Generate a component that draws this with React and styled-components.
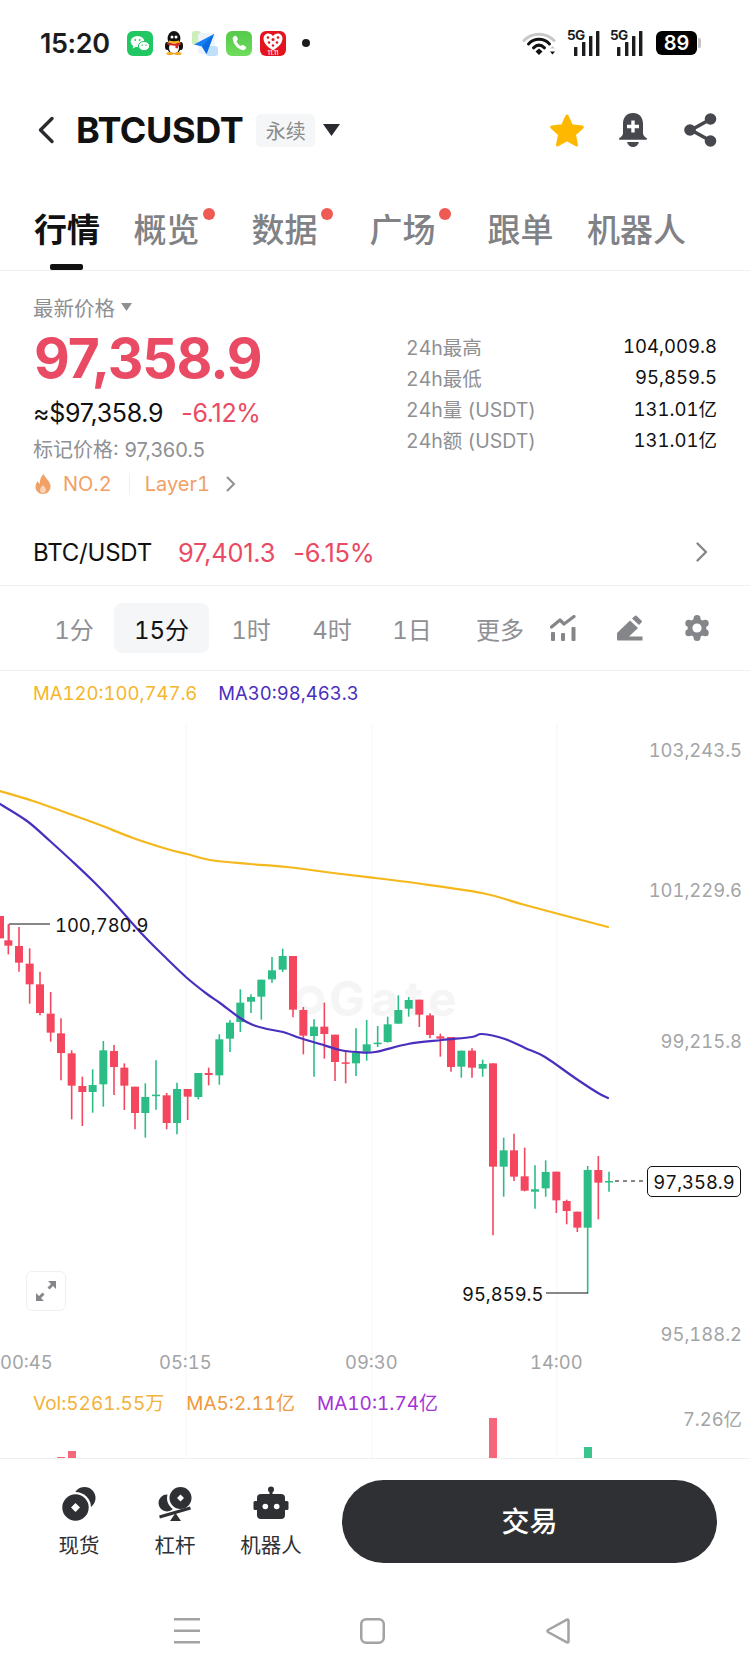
import React from "react";
import styled, { createGlobalStyle } from "styled-components";

const FONT = `Inter, "Noto Sans CJK SC", sans-serif`;
const RED = "#ea4b64";
const ORANGE = "#f1a066";

const Global = createGlobalStyle`
  html, body { margin: 0; padding: 0; background: #fff; }
  body { font-family: ${FONT}; color: #111; }
  * { box-sizing: border-box; }
`;

const Page = styled.div`
  width: 750px;
  height: 1675px;
  overflow: hidden;
  background: #fff;
  display: flex;
  flex-direction: column;
`;

/* ---------- status bar ---------- */
const StatusBar = styled.div`
  height: 84px;
  display: flex;
  align-items: center;
  padding: 2px 53px 0 40px;
`;
const Clock = styled.span`
  font-size: 27px;
  font-weight: 600;
  color: #1c1c1e;
  width: 87px;
  letter-spacing: -0.4px;
`;
const AppIcons = styled.div`
  display: flex;
  align-items: center;
  gap: 8px;
`;
const StatusDot = styled.span`
  width: 8px;
  height: 8px;
  border-radius: 50%;
  background: #1c1c1e;
  margin-left: 8px;
`;
const StatusRight = styled.div`
  margin-left: auto;
  display: flex;
  align-items: center;
  gap: 10px;
`;
const Signal = styled.div`
  position: relative;
  width: 33px;
  height: 25px;
`;
const SignalText = styled.span`
  position: absolute;
  left: 0;
  top: -3px;
  font-size: 13.5px;
  font-weight: 700;
  letter-spacing: -0.6px;
  color: #1c1c1e;
  line-height: 15px;
`;
const Battery = styled.div`
  width: 41px;
  height: 24px;
  margin-left: 3px;
  border-radius: 6px;
  background: #000;
  color: #fff;
  font-size: 20px;
  font-weight: 600;
  display: flex;
  align-items: center;
  justify-content: center;
  position: relative;
  &::after {
    content: "";
    position: absolute;
    right: -4px;
    top: 7px;
    width: 3px;
    height: 10px;
    border-radius: 0 2px 2px 0;
    background: #c4c4c4;
  }
`;

/* ---------- header ---------- */
const Header = styled.div`
  height: 92px;
  display: flex;
  align-items: center;
  padding: 0 33px 0 37px;
`;
const Symbol = styled.h1`
  margin: 0 0 0 21px;
  font-size: 36px;
  font-weight: 700;
  letter-spacing: -0.4px;
  color: #111;
`;
const ContractTag = styled.span`
  margin-left: 13px;
  width: 59px;
  height: 33px;
  border-radius: 5px;
  background: #f5f6f7;
  color: #8a8a8a;
  font-size: 20px;
  display: flex;
  align-items: center;
  justify-content: center;
`;
const HeaderActions = styled.div`
  margin-left: auto;
  display: flex;
  align-items: center;
  gap: 33px;
`;
const CaretIcon = styled.svg`
  margin-left: 8px;
  display: block;
`;

/* ---------- tabs ---------- */
const Tabs = styled.nav`
  height: 95px;
  padding: 32px 0 0 34px;
  display: flex;
  gap: 33.5px;
  border-bottom: 1px solid #f0f0f0;
`;
const Tab = styled.div`
  position: relative;
  height: 44px;
  line-height: 44px;
  font-size: 33px;
  font-weight: ${(p) => (p.$active ? 600 : 500)};
  color: ${(p) => (p.$active ? "#111" : "#808285")};
  padding-right: ${(p) => (p.$dot ? 18.5 : 0)}px;
  white-space: nowrap;
  ${(p) =>
    p.$dot &&
    `&::before {
      content: "";
      position: absolute;
      left: 69px;
      top: 0;
      width: 12px;
      height: 12px;
      border-radius: 50%;
      background: #f05a55;
    }`}
  ${(p) =>
    p.$active &&
    `&::after {
      content: "";
      position: absolute;
      left: 16px;
      top: 56px;
      width: 33px;
      height: 6px;
      border-radius: 2px;
      background: #111;
    }`}
`;

/* ---------- price info ---------- */
const Info = styled.section`
  height: 248px;
  padding: 21px 33px 0;
  display: flex;
  justify-content: space-between;
`;
const InfoLeft = styled.div`
  display: flex;
  flex-direction: column;
`;
const LatestLabel = styled.div`
  display: flex;
  align-items: center;
  gap: 6px;
  height: 30px;
  margin-bottom: 1px;
  font-size: 20.5px;
  color: #8f9093;
`;
const Price = styled.div`
  height: 70px;
  margin-left: 1px;
  line-height: 70px;
  font-size: 55.2px;
  font-weight: 700;
  letter-spacing: -1.1px;
  color: ${RED};
`;
const FiatRow = styled.div`
  margin-top: 5px;
  height: 30px;
  display: flex;
  align-items: center;
  gap: 18px;
  font-size: 25px;
  letter-spacing: -0.3px;
  color: #111;
`;
const Change = styled.span`
  color: ${RED};
`;
const MarkPrice = styled.div`
  margin-top: 7px;
  height: 30px;
  line-height: 30px;
  font-size: 20px;
  color: #8f9093;
`;
const TagRow = styled.div`
  margin-top: 4px;
  height: 30px;
  display: flex;
  align-items: center;
  font-size: 20px;
  font-variant-numeric: tabular-nums;
  color: ${ORANGE};
`;
const Rank = styled.span`
  margin-left: 10px;
`;
const TagDivider = styled.span`
  width: 1px;
  height: 22px;
  background: #f0f0f0;
  margin: 0 15px 0 17px;
`;
const TagChevron = styled.svg`
  margin-left: 15px;
  display: block;
`;
const Stats = styled.dl`
  margin: 38.5px 0 0;
  width: 311px;
  display: flex;
  flex-direction: column;
  font-variant-numeric: tabular-nums;
`;
const StatRow = styled.div`
  height: 31px;
  display: flex;
  align-items: center;
  justify-content: space-between;
`;
const StatKey = styled.dt`
  font-size: 19.5px;
  color: #8f9093;
`;
const StatValue = styled.dd`
  margin: 0;
  font-size: 18.5px;
  color: #111;
`;

/* ---------- pair row ---------- */
const PairRow = styled.div`
  height: 67px;
  padding: 0 41px 0 33px;
  display: flex;
  align-items: center;
  font-size: 24px;
  letter-spacing: -0.2px;
  border-bottom: 1px solid #f0f0f0;
`;
const PairPrice = styled.span`
  color: ${RED};
  font-size: 25.4px;
  margin-left: ${(p) => p.$gap}px;
`;
const PairChevron = styled.svg`
  margin-left: auto;
  display: block;
`;

/* ---------- timeframe row ---------- */
const Timeframes = styled.div`
  height: 85px;
  padding-left: 34px;
  display: flex;
  align-items: center;
  border-bottom: 1px solid #f0f0f0;
  font-variant-numeric: tabular-nums;
`;
const Frame = styled.div`
  width: ${(p) => p.$w}px;
  height: 50px;
  border-radius: 8px;
  display: flex;
  align-items: center;
  justify-content: center;
  font-size: 24px;
  color: ${(p) => (p.$active ? "#111" : "#8f9093")};
  background: ${(p) => (p.$active ? "#f5f6f7" : "transparent")};
`;
const FrameIcons = styled.div`
  margin-left: 3px;
  display: flex;
  align-items: center;
  gap: 41px;
`;

/* ---------- chart ---------- */
const Chart = styled.section`
  position: relative;
  height: 787px;
  overflow: hidden;
  font-variant-numeric: tabular-nums;
`;
const ChartSvg = styled.svg`
  display: block;
`;
const Legend = styled.div`
  position: absolute;
  left: ${(p) => p.$x}px;
  top: ${(p) => p.$y - 670}px;
  height: 28px;
  display: flex;
  align-items: center;
  font-size: ${(p) => p.$size}px;
  white-space: nowrap;
`;
const LegendItem = styled.span`
  color: ${(p) => p.$color};
  margin-right: ${(p) => p.$gap || 0}px;
`;
const AxisLabel = styled.span`
  position: absolute;
  right: 8px;
  top: ${(p) => p.$y - 670 - 14}px;
  line-height: 28px;
  font-size: 18.4px;
  color: #a3a4a6;
`;
const TimeLabel = styled.span`
  position: absolute;
  left: ${(p) => p.$x}px;
  top: ${(p) => p.$y - 670 - 14}px;
  line-height: 28px;
  font-size: 18.4px;
  color: #a3a4a6;
`;
const PriceNote = styled.span`
  position: absolute;
  left: ${(p) => p.$x}px;
  top: ${(p) => p.$y - 670 - 14}px;
  line-height: 28px;
  font-size: 18.4px;
  color: #111;
`;
const LastPriceTag = styled.span`
  position: absolute;
  left: 647px;
  top: ${1165 - 670}px;
  width: 94px;
  height: 31px;
  border: 1.5px solid #111;
  border-radius: 5px;
  background: #fff;
  display: flex;
  align-items: center;
  justify-content: center;
  font-size: 18.4px;
  color: #111;
`;
const ExpandButton = styled.button`
  position: absolute;
  left: 26px;
  top: ${1270 - 670}px;
  width: 40px;
  height: 40px;
  padding: 0;
  border: 1.5px solid #f0f0f0;
  border-radius: 6px;
  background: #fff;
  display: flex;
  align-items: center;
  justify-content: center;
`;

/* ---------- bottom ---------- */
const TradeBar = styled.footer`
  height: 123px;
  padding: 21px 33px 0 31px;
  display: flex;
  align-items: flex-start;
  border-top: 1px solid #f0f0f0;
`;
const Action = styled.div`
  width: 96px;
  display: flex;
  flex-direction: column;
  align-items: center;
  padding-top: 6px;
  gap: 9px;
  font-size: 20.5px;
  line-height: 30px;
  color: #2f3034;
`;
const ActionIcon = styled.svg`
  display: block;
  width: 36px;
  height: 36px;
`;
const TradeButton = styled.button`
  margin-left: 23px;
  flex: 1;
  height: 83px;
  padding: 0 0 3px;
  border: 0;
  border-radius: 42px;
  background: #2f3034;
  color: #fff;
  font-family: ${FONT};
  font-size: 28px;
  font-weight: 500;
`;
const NavBar = styled.div`
  flex: 1;
  padding: 37px 0 0 174px;
  display: flex;
  align-items: flex-start;
  gap: 160px;
`;

/* ---------- drawings ---------- */
const WeChatIcon = () => (
  <svg width="26" height="25" viewBox="0 0 26 25">
    <rect width="26" height="25" rx="6" fill="#20c763" />
    <ellipse cx="10.5" cy="10.5" rx="6.8" ry="5.6" fill="#fff" />
    <path d="M6.5 14.5l-1 3 3.3-1.6z" fill="#fff" />
    <ellipse cx="17" cy="15" rx="5.6" ry="4.6" fill="#fff" stroke="#20c763" strokeWidth="1" />
    <circle cx="8.3" cy="9" r=".9" fill="#20c763" />
    <circle cx="12.6" cy="9" r=".9" fill="#20c763" />
    <circle cx="15.2" cy="14.2" r=".7" fill="#20c763" />
    <circle cx="19" cy="14.2" r=".7" fill="#20c763" />
  </svg>
);
const QQIcon = () => (
  <svg width="23" height="24" viewBox="-3 0 23 24">
    <ellipse cx="3" cy="15" rx="2" ry="4" fill="#111" />
    <ellipse cx="17" cy="15" rx="2" ry="4" fill="#111" />
    <ellipse cx="10" cy="7.5" rx="6.4" ry="7.5" fill="#111" />
    <ellipse cx="10" cy="16" rx="6.8" ry="7" fill="#111" />
    <ellipse cx="10" cy="17" rx="5" ry="5.6" fill="#fff" />
    <circle cx="8" cy="6" r="1.5" fill="#fff" />
    <circle cx="12" cy="6" r="1.5" fill="#fff" />
    <path d="M5 9.5c3 1 7 1 10 0l.5 2c-3 1.600-8 1.600-11 0z" fill="#f5b81c" />
    <path d="M3.500 11.500c4 1.500 9 1.500 13 0l.5 1.800c-1 .6-2 1-3 1.200v3l-2.500-.5v-2.300c-3 .2-5.500-.3-8.500-1.400z" fill="#d8281f" />
    <ellipse cx="6" cy="22.500" rx="3.600" ry="1.500" fill="#f5a81c" />
    <ellipse cx="14" cy="22.500" rx="3.600" ry="1.500" fill="#f5a81c" />
  </svg>
);
const SendIcon = () => (
  <svg width="26" height="25" viewBox="0 0 26 25">
    <rect x="0" y="0" width="9" height="14" rx="3" fill="#cdeeb8" />
    <rect x="6" y="2" width="17" height="21" rx="3" fill="#eef3fa" />
    <rect x="14" y="15" width="12" height="10" rx="3" fill="#bfe0fb" />
    <path d="M22 3L2 13.500l8 2 4.500 7.500z" fill="#1480f3" />
    <path d="M22 3L10 15.500l4.500 7.500z" fill="#0b6adf" />
  </svg>
);
const PhoneIcon = () => (
  <svg width="26" height="25" viewBox="0 0 26 25">
    <defs>
      <linearGradient id="ph" x1="0" y1="0" x2="0" y2="1">
        <stop offset="0" stopColor="#54c94a" />
        <stop offset="1" stopColor="#6fdc5c" />
      </linearGradient>
    </defs>
    <rect width="26" height="25" rx="6" fill="url(#ph)" />
    <path d="M8.500 5c1-.4 1.700-.2 2.200.6l1 2c.3.700.2 1.200-.3 1.700l-.9.900c.8 2 2.300 3.700 4.300 4.900l1-.8c.5-.4 1.100-.5 1.700-.1l1.900 1.200c.8.500.9 1.200.4 2.100-.8 1.400-2.200 2-3.700 1.500-5-1.600-8.700-5.900-9.400-11-.2-1.200.6-2.300 1.800-3z" fill="#fff" />
  </svg>
);
const HeartIcon = () => (
  <svg width="26" height="25" viewBox="0 0 26 25">
    <rect width="26" height="25" rx="6" fill="#e3141f" />
    <path d="M13 19.500C6 15 3.500 11 3.500 7.500c0-3 2.300-5 4.800-5 2 0 3.700 1 4.700 2.800C14 3.500 15.700 2.500 17.700 2.500c2.500 0 4.800 2 4.800 5 0 3.500-2.500 7.500-9.500 12z" fill="#fff" />
    <g fill="#e3141f">
      <circle cx="8" cy="6.500" r="1.300" /><circle cx="13" cy="8.500" r="1.500" /><circle cx="18" cy="6.500" r="1.300" />
      <circle cx="9" cy="11.500" r="1.200" /><circle cx="17" cy="11.500" r="1.200" /><circle cx="13" cy="14.500" r="1.200" />
    </g>
    <text x="13" y="24" textAnchor="middle" fontFamily={FONT} fontSize="5.500" fontWeight="700" fill="#ffe3d8">11.11</text>
  </svg>
);
const WifiIcon = () => (
  <svg width="35" height="25" viewBox="0 0 35 25" fill="none" strokeLinecap="round">
    <path d="M2 9.500C10 1 24 1 32 9.500" stroke="#c8c8c8" strokeWidth="3" />
    <path d="M6.500 13C12.500 6.800 21.500 6.800 27.500 13" stroke="#111" strokeWidth="3" />
    <path d="M11.500 16.800c3.500-3.400 7.500-3.400 11 0" stroke="#111" strokeWidth="3" />
    <path d="M13.500 20.500l3.500-3 3.500 3-3.500 3.500z" fill="#111" />
    <path d="M28 17.500h5l-2.500-2.600z" fill="#c8c8c8" />
    <path d="M28 20.500h5l-2.500 3z" fill="#111" />
  </svg>
);
const SignalBars = () => (
  <svg width="33" height="25" viewBox="0 0 33 25">
    <rect x="7" y="16" width="3.400" height="9" rx=".5" fill="#1c1c1e" />
    <rect x="15" y="11" width="3.400" height="14" rx=".5" fill="#1c1c1e" />
    <rect x="22" y="5" width="3.400" height="20" rx=".5" fill="#1c1c1e" />
    <rect x="29" y="0" width="3.400" height="25" rx=".5" fill="#1c1c1e" />
  </svg>
);

const STROKE = "#46484d";

const BackIcon = () => (
  <svg width="18" height="28" viewBox="0 0 18 28" fill="none">
    <path d="M15 2.500L3.500 14 15 25.500" stroke="#2a2b2e" strokeWidth="3.400" strokeLinecap="round" strokeLinejoin="round" />
  </svg>
);
const StarIcon = () => (
  <svg width="36" height="34" viewBox="0 0 36 34">
    <path
      d="M18 3l4.600 9.800 10.700 1.300-7.900 7.300 2.100 10.600L18 26.700 8.500 32l2.100-10.600-7.900-7.300 10.700-1.300z"
      fill="#ffb800"
      stroke="#ffb800"
      strokeWidth="3"
      strokeLinejoin="round"
    />
  </svg>
);
const BellIcon = () => (
  <svg width="30" height="34" viewBox="0 0 30 34">
    <path d="M15 0c6.500 0 10 4.800 10 10.500v9.500c0 2.200 1.300 3.700 3.500 5 1 .6.700 1.800-.5 1.800H2c-1.200 0-1.500-1.200-.5-1.800 2.200-1.300 3.500-2.800 3.500-5v-9.500C5 4.800 8.500 0 15 0z" fill={STROKE} />
    <path d="M9 29h12c-.8 3-3.200 5-6 5s-5.200-2-6-5z" fill={STROKE} />
    <path d="M13.300 7.500h3.400v4.300H21v3.400h-4.300v4.300h-3.400v-4.300H9v-3.400h4.300z" fill="#fff" />
  </svg>
);
const ShareIcon = () => (
  <svg width="36" height="34" viewBox="-3 0 36 34" fill={STROKE}>
    <path d="M26 6.500L7 17l19 10.500" fill="none" stroke={STROKE} strokeWidth="3.600" />
    <circle cx="26.500" cy="6" r="5.800" />
    <circle cx="6" cy="17" r="5.800" />
    <circle cx="26.500" cy="28" r="5.800" />
  </svg>
);

const IndicatorIcon = () => (
  <svg width="26" height="26" viewBox="0 0 26 26" fill="#84868a">
    <path d="M1.500 12l8.500-7 4 4 10-7.500" fill="none" stroke="#84868a" strokeWidth="3.200" strokeLinecap="round" strokeLinejoin="round" />
    <rect x="1" y="17" width="4" height="9" rx="1" />
    <rect x="11" y="18" width="4" height="8" rx="1" />
    <rect x="21.500" y="12" width="4" height="14" rx="1" />
  </svg>
);
const PenIcon = () => (
  <svg width="26" height="26" viewBox="0 0 26 26" fill="#84868a">
    <path d="M0 18L13 5.500l8 7.500-9 8.500h13.500V25.500H1a1 1 0 0 1-1-1z" />
    <path d="M15 3.500L18 .8a1 1 0 0 1 1.400 0l5.300 5a1 1 0 0 1 0 1.400L22 10z" />
  </svg>
);
const GEAR_POINTS = [0, 60, 120, 180, 240, 300].map((deg) => {
  const r = (deg * Math.PI) / 180;
  return [13 + 9.5 * Math.sin(r), 13 - 9.5 * Math.cos(r)];
});
const GearIcon = () => (
  <svg width="26" height="26" viewBox="0 0 26 26" fill="#84868a">
    <path d="M13 4l7.800 4.500v9L13 22l-7.800-4.500v-9z" stroke="#84868a" strokeWidth="3" strokeLinejoin="round" />
    {GEAR_POINTS.map(([x, y]) => (
      <circle key={`${x}-${y}`} cx={x} cy={y} r="3.500" />
    ))}
    <circle cx="13" cy="13" r="4.600" fill="#fff" />
  </svg>
);

const CoinsIcon = () => (
  <ActionIcon viewBox="0 0 36 36">
    <circle cx="23.500" cy="12" r="11" fill="#2f3034" />
    <circle cx="14.500" cy="21.500" r="15.500" fill="#fff" />
    <circle cx="14.500" cy="21.500" r="13.200" fill="#2f3034" />
    <path d="M14.500 17l4.500 4.500-4.500 4.500-4.500-4.500z" fill="#fff" />
  </ActionIcon>
);
const LeverIcon = () => (
  <ActionIcon viewBox="0 0 36 36">
    <circle cx="10" cy="17" r="8.500" fill="#2f3034" />
    <circle cx="23.500" cy="12" r="13.500" fill="#fff" />
    <circle cx="23.500" cy="12" r="11" fill="#2f3034" />
    <path d="M23.500 8.500l3.500 3.500-3.500 3.500L20 12z" fill="#fff" />
    <path d="M2.500 31l31-9" stroke="#2f3034" strokeWidth="3" />
    <path d="M18.500 27l5.500 8h-11z" fill="#2f3034" />
  </ActionIcon>
);
const RobotIcon = () => (
  <ActionIcon viewBox="0 0 36 36">
    <circle cx="18" cy="3.500" r="3" fill="#2f3034" />
    <rect x="16.500" y="4" width="3" height="6" fill="#2f3034" />
    <rect x="4" y="8" width="28" height="25" rx="4" fill="#2f3034" />
    <rect x="0.500" y="15" width="4.500" height="9" rx="1.500" fill="#2f3034" />
    <rect x="31" y="15" width="4.500" height="9" rx="1.500" fill="#2f3034" />
    <circle cx="12.300" cy="20.500" r="2.800" fill="#fff" />
    <circle cx="23.700" cy="20.500" r="2.800" fill="#fff" />
  </ActionIcon>
);

/* ---------- chart data (real page coordinates) ---------- */
const LEFT = [
  [0, 105, 172, 105, 172, "r"], [25, 178, 194, 130, 220, "r"], [57, 195, 245, 138, 272, "r"], [89, 248, 310, 202, 368, "r"],
  [120, 310, 396, 272, 403, "r"], [152, 398, 455, 333, 482, "r"], [183, 457, 516, 412, 598, "r"], [215, 517, 614, 508, 715, "r"],
  [247, 615, 633, 587, 735, "r"], [278, 612, 633, 565, 695, "g"], [310, 508, 610, 480, 677, "g"], [342, 510, 558, 492, 642, "r"],
  [373, 560, 614, 547, 687, "r"], [405, 617, 696, 617, 745, "r"], [436, 648, 696, 607, 770, "g"], [468, 641, 645, 538, 686, "g"],
  [500, 643, 726, 636, 745, "r"], [531, 624, 726, 605, 760, "g"], [563, 624, 647, 624, 717, "r"], [595, 576, 648, 576, 655, "g"],
  [626, 576, 582, 560, 613, "r"], [658, 475, 583, 460, 611, "g"], [690, 425, 473, 417, 513, "g"], [721, 365, 423, 325, 453, "g"],
  [753, 348, 362, 340, 396, "g"], [784, 296, 347, 296, 416, "g"], [816, 268, 295, 228, 305, "g"], [848, 225, 266, 203, 273, "g"],
  [879, 225, 386, 225, 409, "r"], [910, 387, 464, 378, 520, "r"], [942, 437, 465, 415, 587, "g"], [973, 437, 459, 365, 533, "r"],
  [1005, 461, 543, 461, 600, "r"], [1037, 544, 548, 513, 607, "r"], [1068, 515, 547, 442, 585, "g"], [1100, 490, 512, 417, 539, "g"],
].map(([x, a, b, c, d, t]) => [x / 3, a / 3 + 880, b / 3 + 880, c / 3 + 880, d / 3 + 880, t]);

const RIGHT = [
  [8, 245, 248, 195, 258, "g"], [38, 190, 243, 167, 245, "g"], [70, 147, 188, 103, 188, "g"], [101, 117, 143, 108, 167, "g"],
  [133, 116, 161, 116, 198, "r"], [165, 163, 222, 157, 232, "r"], [196, 226, 233, 218, 287, "r"], [228, 228, 318, 228, 332, "r"],
  [259, 269, 317, 269, 350, "g"], [291, 269, 320, 262, 350, "r"], [323, 309, 323, 296, 347, "g"], [354, 307, 617, 307, 823, "r"],
  [386, 568, 617, 530, 707, "g"], [417, 568, 647, 518, 660, "r"], [449, 646, 689, 560, 691, "r"], [480, 685, 692, 613, 743, "g"],
  [512, 633, 682, 598, 707, "g"], [544, 632, 718, 632, 756, "r"], [575, 720, 750, 716, 790, "r"], [607, 752, 800, 752, 813, "r"],
  [638, 627, 800, 615, 997, "g"], [670, 627, 665, 585, 775, "r"], [702, 660, 664, 632, 692, "g"],
].map(([x, a, b, c, d, t]) => [x / 3 + 375, a / 3 + 960, b / 3 + 960, c / 3 + 960, d / 3 + 960, t]);

const CANDLES = [...LEFT, ...RIGHT];
const COLORS = { r: "#f4475f", g: "#2bbd85" };

const MA120 = [[0, 790], [33, 800], [67, 812], [100, 824], [133, 837], [167, 848], [187, 853], [210, 859], [250, 863], [287, 866], [333, 872], [375, 877], [415, 882], [482, 892], [525, 904], [608, 926]];
const MA30 = [[0, 803], [27, 820], [50, 840], [73, 861], [95, 882], [117, 905], [143, 934], [167, 958], [187, 977], [207, 993], [220, 1002], [240, 1017], [253, 1024], [267, 1028], [283, 1031], [300, 1037], [320, 1043], [340, 1049], [357, 1051], [375, 1051], [408, 1043], [442, 1039], [472, 1036], [482, 1033], [505, 1038], [525, 1047], [545, 1056], [575, 1077], [598, 1092], [608, 1097]];

/* Catmull-Rom to cubic Bézier, so the averages run as smooth curves */
const smooth = (pts) => {
  let d = `M${pts[0][0]} ${pts[0][1]}`;
  for (let i = 0; i < pts.length - 1; i++) {
    const p0 = pts[i - 1] || pts[i];
    const p1 = pts[i];
    const p2 = pts[i + 1];
    const p3 = pts[i + 2] || p2;
    const c1x = p1[0] + (p2[0] - p0[0]) / 6;
    const c1y = p1[1] + (p2[1] - p0[1]) / 6;
    const c2x = p2[0] - (p3[0] - p1[0]) / 6;
    const c2y = p2[1] - (p3[1] - p1[1]) / 6;
    d += ` C${c1x} ${c1y} ${c2x} ${c2y} ${p2[0]} ${p2[1]}`;
  }
  return d;
};

const CandleChart = () => (
  <ChartSvg width="750" height="787" viewBox="0 670 750 787">
    {[186, 372, 557].map((x) => (
      <line key={x} x1={x} x2={x} y1="723" y2="1457" stroke="#f6f6f6" strokeWidth="1" />
    ))}
    <circle cx="310" cy="999" r="11" fill="none" stroke="#f6f6f6" strokeWidth="7" />
    <text x="329" y="1015" fontFamily={FONT} fontSize="48" fontWeight="700" letterSpacing="6" fill="#f5f5f5">Gate</text>
    {CANDLES.map(([x, a, b, c, d, t], i) => (
      <g key={i}>
        <line x1={x} x2={x} y1={c} y2={d} stroke={COLORS[t]} strokeWidth="1.600" />
        <rect x={x - 4} y={a} width="8" height={Math.max(b - a, 1.500)} fill={COLORS[t]} />
      </g>
    ))}
    <path d={smooth(MA120)} fill="none" stroke="#f5b81c" strokeWidth="2.200" strokeLinecap="round" />
    <path d={smooth(MA30)} fill="none" stroke="#4a2fbf" strokeWidth="2.200" strokeLinecap="round" />
    <line x1="9" x2="50" y1="923" y2="923" stroke="#111" strokeWidth="1.200" />
    <line x1="9" x2="9" y1="923" y2="940" stroke="#f4475f" strokeWidth="1.500" />
    <line x1="546" x2="588" y1="1292" y2="1292" stroke="#111" strokeWidth="1.200" />
    <line x1="615" x2="645" y1="1180" y2="1180" stroke="#111" strokeWidth="1.200" strokeDasharray="4 4" />
    <rect x="489" y="1417" width="8" height="41" fill="#f7677c" />
    <rect x="584" y="1446" width="8" height="12" fill="#3cc48f" />
    <rect x="68" y="1450" width="8" height="8" fill="#f7677c" />
    <rect x="57" y="1456" width="8" height="2" fill="#f7677c" />
  </ChartSvg>
);

const TABS = [
  { label: "行情", active: true },
  { label: "概览", dot: true },
  { label: "数据", dot: true },
  { label: "广场", dot: true },
  { label: "跟单" },
  { label: "机器人" },
];
const STATS = [
  ["24h最高", "104,009.8"],
  ["24h最低", "95,859.5"],
  ["24h量 (USDT)", "131.01亿"],
  ["24h额 (USDT)", "131.01亿"],
];
const FRAMES = [
  ["1分", 80],
  ["15分", 95, true],
  ["1时", 84],
  ["4时", 78],
  ["1日", 82],
  ["更多", 94],
];

export default function App() {
  return (
    <Page>
      <Global />
      <StatusBar>
        <Clock>15:20</Clock>
        <AppIcons>
          <WeChatIcon />
          <QQIcon />
          <SendIcon />
          <PhoneIcon />
          <HeartIcon />
          <StatusDot />
        </AppIcons>
        <StatusRight>
          <WifiIcon />
          <Signal>
            <SignalBars />
            <SignalText>5G</SignalText>
          </Signal>
          <Signal>
            <SignalBars />
            <SignalText>5G</SignalText>
          </Signal>
          <Battery>89</Battery>
        </StatusRight>
      </StatusBar>

      <Header>
        <BackIcon />
        <Symbol>BTCUSDT</Symbol>
        <ContractTag>永续</ContractTag>
        <CaretIcon width="17" height="12" viewBox="0 0 17 12">
          <path d="M0 0h17l-8.500 12z" fill="#2a2b2e" />
        </CaretIcon>
        <HeaderActions>
          <StarIcon />
          <BellIcon />
          <ShareIcon />
        </HeaderActions>
      </Header>

      <Tabs>
        {TABS.map((t) => (
          <Tab key={t.label} $active={t.active} $dot={t.dot}>{t.label}</Tab>
        ))}
      </Tabs>

      <Info>
        <InfoLeft>
          <LatestLabel>
            最新价格
            <svg width="11" height="8" viewBox="0 0 11 8"><path d="M0 0h11L5.500 8z" fill="#8f9093" /></svg>
          </LatestLabel>
          <Price>97,358.9</Price>
          <FiatRow>
            <span>≈$97,358.9</span>
            <Change>-6.12%</Change>
          </FiatRow>
          <MarkPrice>标记价格: 97,360.5</MarkPrice>
          <TagRow>
            <svg width="20" height="20" viewBox="0 0 20 20">
              <path d="M10.500 0c1 3.500 6.500 6.500 7 12 .3 4.500-3.300 8-7.500 8s-7.800-3.300-7.500-7.500c.1-2.200 1-4 2.500-5.500.2 1.500.8 2.500 1.800 3C6.500 6 8 2.500 10.500 0z" fill={ORANGE} />
              <path d="M10 11c1.500 1.500 3 3 3 5 0 1.800-1.300 3-3 3s-3-1.200-3-3c0-2 1.500-3.500 3-5z" fill="#fff" opacity=".55" />
            </svg>
            <Rank>NO.2</Rank>
            <TagDivider />
            <span>Layer1</span>
            <TagChevron width="12" height="18" viewBox="0 0 12 18">
              <path d="M2.500 2.500L9 9l-6.500 6.500" fill="none" stroke="#8f9093" strokeWidth="2" strokeLinecap="round" />
            </TagChevron>
          </TagRow>
        </InfoLeft>
        <Stats>
          {STATS.map(([k, v]) => (
            <StatRow key={k}>
              <StatKey>{k}</StatKey>
              <StatValue>{v}</StatValue>
            </StatRow>
          ))}
        </Stats>
      </Info>

      <PairRow>
        <span>BTC/USDT</span>
        <PairPrice $gap={26}>97,401.3</PairPrice>
        <PairPrice $gap={18}>-6.15%</PairPrice>
        <PairChevron width="14" height="22" viewBox="0 0 14 22">
          <path d="M2.500 2.500L11 11l-8.500 8.500" fill="none" stroke="#84868a" strokeWidth="2.400" strokeLinecap="round" strokeLinejoin="round" />
        </PairChevron>
      </PairRow>

      <Timeframes>
        {FRAMES.map(([label, w, active]) => (
          <Frame key={label} $w={w} $active={active}>{label}</Frame>
        ))}
        <FrameIcons>
          <IndicatorIcon />
          <PenIcon />
          <GearIcon />
        </FrameIcons>
      </Timeframes>

      <Chart>
        <CandleChart />
        <Legend $x={33} $y={678} $size={18.5}>
          <LegendItem $color="#f5b62b" $gap={21}>MA120:100,747.6</LegendItem>
          <LegendItem $color="#4a2fbf">MA30:98,463.3</LegendItem>
        </Legend>
        <AxisLabel $y={749}>103,243.5</AxisLabel>
        <AxisLabel $y={889}>101,229.6</AxisLabel>
        <AxisLabel $y={1040}>99,215.8</AxisLabel>
        <AxisLabel $y={1186}>97,202.0</AxisLabel>
        <AxisLabel $y={1333}>95,188.2</AxisLabel>
        <AxisLabel $y={1418}>7.26亿</AxisLabel>
        <PriceNote $x={55} $y={924}>100,780.9</PriceNote>
        <PriceNote $x={462} $y={1293}>95,859.5</PriceNote>
        <LastPriceTag>97,358.9</LastPriceTag>
        <ExpandButton aria-label="expand">
          <svg width="22" height="22" viewBox="0 0 22 22" fill="#84868a">
            <path d="M13 1h8v8l-3-3-3.500 3.500-2-2L16 4z" />
            <path d="M9 21H1v-8l3 3 3.500-3.500 2 2L6 18z" />
          </svg>
        </ExpandButton>
        <TimeLabel $x={0} $y={1361}>00:45</TimeLabel>
        <TimeLabel $x={159} $y={1361}>05:15</TimeLabel>
        <TimeLabel $x={345} $y={1361}>09:30</TimeLabel>
        <TimeLabel $x={530} $y={1361}>14:00</TimeLabel>
        <Legend $x={33} $y={1386} $size={19}>
          <LegendItem $color="#f2b33a" $gap={22}>Vol:5261.55万</LegendItem>
          <LegendItem $color="#ee9a3c" $gap={22}>MA5:2.11亿</LegendItem>
          <LegendItem $color="#a633d6">MA10:1.74亿</LegendItem>
        </Legend>
      </Chart>

      <TradeBar>
        <Action><CoinsIcon />现货</Action>
        <Action><LeverIcon />杠杆</Action>
        <Action><RobotIcon />机器人</Action>
        <TradeButton>交易</TradeButton>
      </TradeBar>

      <NavBar>
        <svg width="26" height="26" viewBox="0 0 26 26">
          <rect y="0" width="26" height="2.500" fill="#a3a3a3" />
          <rect y="11.500" width="26" height="2.500" fill="#a3a3a3" />
          <rect y="23" width="26" height="2.500" fill="#a3a3a3" />
        </svg>
        <svg width="25" height="26" viewBox="0 0 25 26">
          <rect x="1.250" y="1.250" width="22.500" height="23.500" rx="5" fill="none" stroke="#a3a3a3" strokeWidth="2.500" />
        </svg>
        <svg width="26" height="26" viewBox="0 0 26 26">
          <path d="M23.500 2.500v21a1 1 0 0 1-1.600.8L3 14a1.200 1.200 0 0 1 0-2L21.900 1.700a1 1 0 0 1 1.600.8z" fill="none" stroke="#a3a3a3" strokeWidth="2.500" strokeLinejoin="round" />
        </svg>
      </NavBar>
    </Page>
  );
}
